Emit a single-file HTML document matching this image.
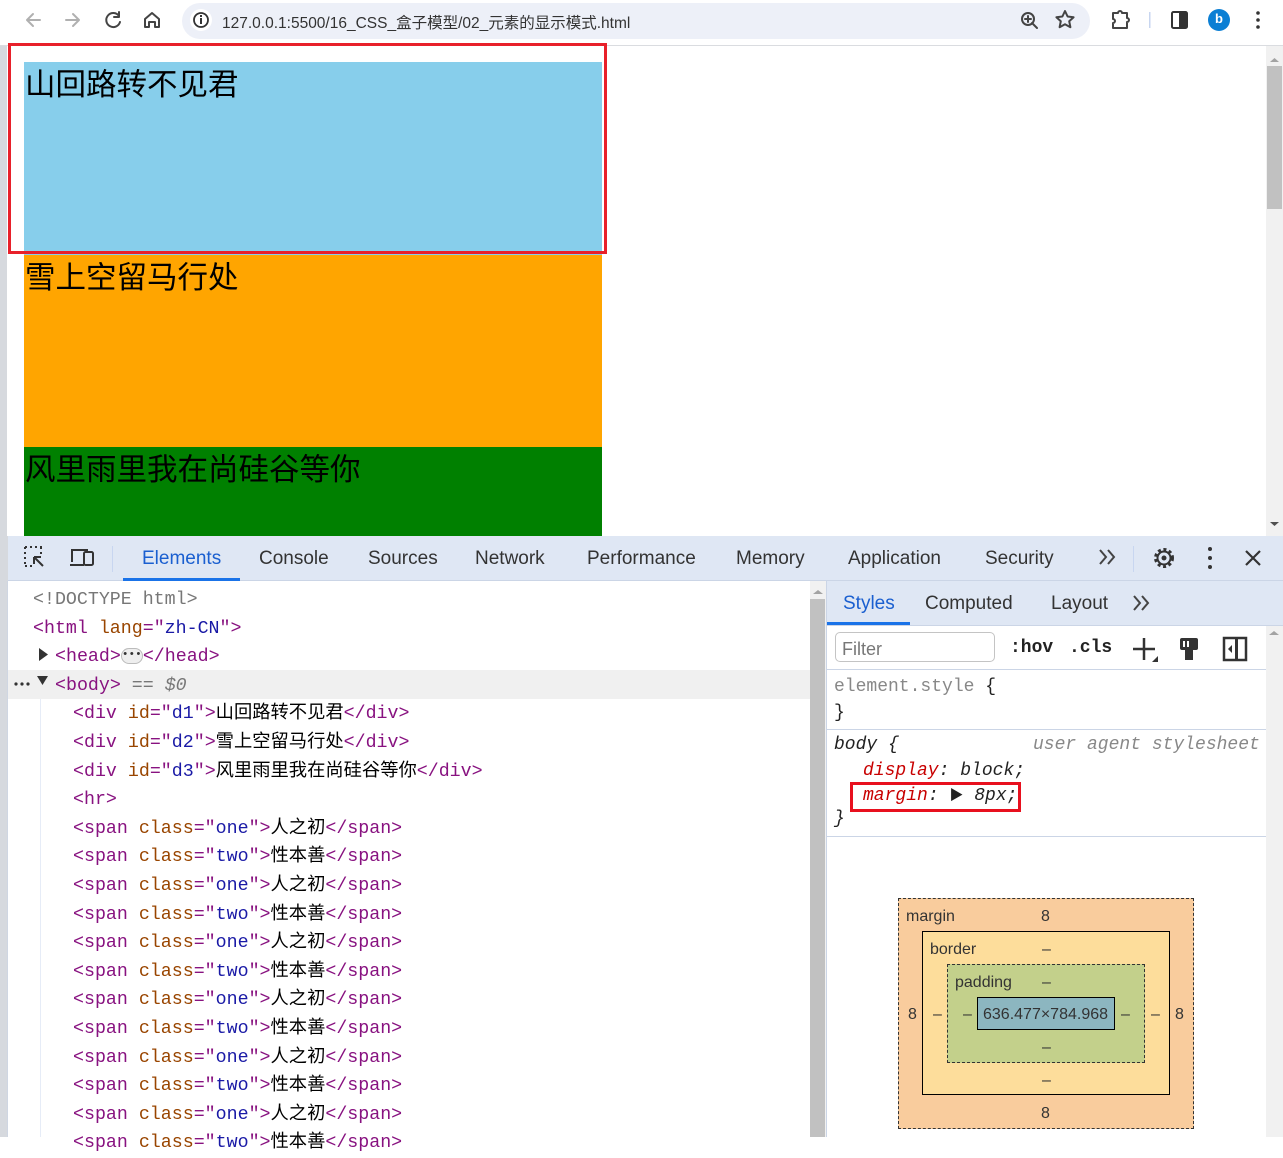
<!DOCTYPE html>
<html><head><meta charset="utf-8">
<style>
*{margin:0;padding:0;box-sizing:border-box}
body{width:1283px;height:1137px;overflow:hidden;position:relative;background:#fff;font-family:"Liberation Sans","Noto Sans CJK SC",sans-serif}
.a{position:absolute}
.mono{font-family:"Liberation Mono","Noto Sans CJK SC",monospace}
.tg{color:#881280}.an{color:#994500}.av{color:#1a1aa6}
.ln{position:absolute;left:0;height:28.6px;line-height:28.6px;font-size:18.3px;white-space:nowrap}
.tab{position:absolute;top:548px;font-size:19px;color:#333}
</style></head><body>
<div class="a" style="left:0;top:0;width:1283px;height:46px;background:#fff;border-bottom:1px solid #dadce0"></div>
<svg class="a" style="left:0;top:0" width="1283" height="46">
<rect x="182" y="3" width="908" height="36" rx="18" fill="#edf0f8"/>
<g fill="none" stroke-width="2" stroke-linecap="round" stroke-linejoin="round">
<path d="M40 20H27M33 14l-6 6 6 6" stroke="#b0b0b0"/>
<path d="M66 20h13M73 14l6 6-6 6" stroke="#b0b0b0"/>
<path d="M119 16a7 7 0 1 0 1 6M119 12v5h-5" stroke="#444"/>
<path d="M145 27v-8l7-6 7 6v8h-4v-5h-6v5z" stroke="#444"/>
<circle cx="1028" cy="19" r="6" stroke="#444"/><path d="M1032 23l5 5M1028 16v6M1025 19h6" stroke="#444"/>
<path d="M1065 11l2.6 5.5 6 .7-4.4 4 1.2 6-5.4-3-5.4 3 1.2-6-4.4-4 6-.7z" stroke="#444"/>
<path d="M1113 13h5a2 2 0 0 1 4 0h5v5a2 2 0 0 1 0 4v6h-14v-5a2 2 0 0 0 0-4z" stroke="#444"/>
</g>
<circle cx="201" cy="20" r="11" fill="#fff"/>
<circle cx="201" cy="20" r="7" fill="none" stroke="#333" stroke-width="1.8"/><rect x="200" y="18" width="2" height="6" fill="#333"/><rect x="200" y="15" width="2" height="2" fill="#333"/>
<rect x="1149" y="12" width="1.5" height="16" fill="#c8d6f0"/>
<rect x="1172" y="12" width="15" height="16" rx="1.5" fill="none" stroke="#333" stroke-width="2"/><rect x="1179" y="12" width="8" height="16" fill="#333"/>
<circle cx="1219" cy="20" r="11" fill="#0b7fd4"/>
<circle cx="1258" cy="13" r="1.8" fill="#333"/><circle cx="1258" cy="20" r="1.8" fill="#333"/><circle cx="1258" cy="27" r="1.8" fill="#333"/>
</svg>
<div class="a" style="left:1213px;top:11px;width:12px;font-size:13px;color:#fff;text-align:center;font-weight:bold">b</div>
<div class="a" style="left:222px;top:11px;font-size:15.5px;color:#333">127.0.0.1:5500/16_CSS_盒子模型/02_元素的显示模式.html</div>

<div class="a" style="left:0;top:46px;width:7px;height:490px;background:#d6d9de"></div>
<div class="a" style="left:24px;top:62px;width:578px;height:193px;background:#87ceeb"></div>
<div class="a" style="left:24px;top:255px;width:578px;height:192px;background:#ffa500"></div>
<div class="a" style="left:24px;top:447px;width:578px;height:89px;background:#008000"></div>
<div class="a" style="left:25px;top:65px;font-size:30.5px;line-height:40px;color:#000">山回路转不见君</div>
<div class="a" style="left:25px;top:258px;font-size:30.5px;line-height:40px;color:#000">雪上空留马行处</div>
<div class="a" style="left:25px;top:450px;font-size:30.5px;line-height:40px;color:#000">风里雨里我在尚硅谷等你</div>
<div class="a" style="left:8px;top:43px;width:599px;height:211px;border:3px solid #e8202a"></div>
<div class="a" style="left:1266px;top:46px;width:17px;height:490px;background:#f1f1f1"></div>
<div class="a" style="left:1267px;top:66px;width:15px;height:143px;background:#c1c1c1"></div>
<svg class="a" style="left:1266px;top:46px" width="17" height="490"><path d="M4 16l4.5-4 4.5 4z" fill="#a3a3a3"/><path d="M4 476l4.5 4 4.5-4z" fill="#505050"/></svg>

<div class="a" style="left:0;top:536px;width:1283px;height:45px;background:#dfe7f4;border-bottom:1px solid #cbd5e6"></div>
<div class="a" style="left:0;top:536px;width:8px;height:601px;background:#d6d9de"></div>
<svg class="a" style="left:0;top:536px" width="1283" height="45">
<g fill="none" stroke="#333" stroke-width="2">
<path d="M25 11h2M30 11h2M35 11h2M40 11h2M25 11v2M25 16v2M25 21v2M25 26v2M25 30h2M30 30h2M41 11v2M41 16v2"/>
<path d="M34 21l9 9M34 21v7M34 21h7"/>
<path d="M72 26V14h16M70 29h14"/><rect x="84" y="16" width="9" height="13" rx="1.5"/>
</g>
<rect x="112" y="10" width="1" height="26" fill="#c8d6f0"/>
<rect x="123" y="42" width="117" height="3" fill="#1a73e8"/>
<path d="M1100 14l6 7-6 7M1108 14l6 7-6 7" fill="none" stroke="#444" stroke-width="2"/>
<rect x="1133" y="10" width="1" height="26" fill="#c8d6f0"/>
<circle cx="1164" cy="22" r="8.5" fill="none" stroke="#333" stroke-width="3" stroke-dasharray="3 2.6"/>
<circle cx="1164" cy="22" r="6.5" fill="none" stroke="#333" stroke-width="2"/><circle cx="1164" cy="22" r="2.5" fill="#333"/>
<circle cx="1210" cy="13" r="2" fill="#333"/><circle cx="1210" cy="22" r="2" fill="#333"/><circle cx="1210" cy="31" r="2" fill="#333"/>
<path d="M1246 15l14 14M1260 15l-14 14" stroke="#333" stroke-width="2.2"/>
</svg>
<div class="tab" style="left:142px;color:#1a5fd0">Elements</div>
<div class="tab" style="left:259px">Console</div>
<div class="tab" style="left:368px">Sources</div>
<div class="tab" style="left:475px">Network</div>
<div class="tab" style="left:587px">Performance</div>
<div class="tab" style="left:736px">Memory</div>
<div class="tab" style="left:848px">Application</div>
<div class="tab" style="left:985px">Security</div>

<div class="a" style="left:7px;top:581px;width:1px;height:556px;background:#cfd6e2"></div>
<div class="a" style="left:8px;top:670px;width:802px;height:29px;background:#f0f0f0"></div>
<div class="a" style="left:40px;top:699px;width:1px;height:438px;background:#e6ecf7"></div>
<div class="a" style="left:810px;top:581px;width:16px;height:556px;background:#f1f1f1"></div>
<div class="a" style="left:810px;top:599px;width:15px;height:538px;background:#c1c1c1"></div>
<svg class="a" style="left:810px;top:581px" width="16" height="20"><path d="M3 13l5-4 5 4z" fill="#a3a3a3"/></svg>
<div class="a" style="left:826px;top:581px;width:1px;height:556px;background:#cbd5e6"></div>
<svg class="a" style="left:0;top:640px" width="60" height="60"><path d="M39 8l9 6.5-9 6.5z" fill="#333"/><path d="M37 36h11l-5.5 9z" fill="#333"/><circle cx="16" cy="44" r="1.6" fill="#333"/><circle cx="22" cy="44" r="1.6" fill="#333"/><circle cx="28" cy="44" r="1.6" fill="#333"/></svg>
<div class="a mono" style="left:0;top:586px;width:810px">
<div class="ln" style="top:0;left:33px;color:#777">&lt;!DOCTYPE html&gt;</div>
<div class="ln" style="top:28.6px;left:33px"><span class="tg">&lt;html </span><span class="an">lang</span><span class="tg">="</span><span class="av">zh-CN</span><span class="tg">"&gt;</span></div>
<div class="ln" style="top:57.2px;left:55px"><span class="tg">&lt;head&gt;</span><span style="display:inline-block;width:22px;height:16px;border:1px solid #bbb;border-radius:8px;background:#eee;font-size:11px;line-height:12px;text-align:center;vertical-align:middle;color:#333">•••</span><span class="tg">&lt;/head&gt;</span></div>
<div class="ln" style="top:85.8px;left:55px"><span class="tg">&lt;body&gt;</span><span style="color:#777;font-style:italic"> == $0</span></div>
<div class="ln" style="top:114.4px;left:73px"><span class="tg">&lt;div </span><span class="an">id</span><span class="tg">="</span><span class="av">d1</span><span class="tg">"&gt;</span>山回路转不见君<span class="tg">&lt;/div&gt;</span></div>
<div class="ln" style="top:143px;left:73px"><span class="tg">&lt;div </span><span class="an">id</span><span class="tg">="</span><span class="av">d2</span><span class="tg">"&gt;</span>雪上空留马行处<span class="tg">&lt;/div&gt;</span></div>
<div class="ln" style="top:171.6px;left:73px"><span class="tg">&lt;div </span><span class="an">id</span><span class="tg">="</span><span class="av">d3</span><span class="tg">"&gt;</span>风里雨里我在尚硅谷等你<span class="tg">&lt;/div&gt;</span></div>
<div class="ln" style="top:200.2px;left:73px"><span class="tg">&lt;hr&gt;</span></div>
<div class="ln" style="top:228.8px;left:73px"><span class="tg">&lt;span </span><span class="an">class</span><span class="tg">="</span><span class="av">one</span><span class="tg">"&gt;</span>人之初<span class="tg">&lt;/span&gt;</span></div>
<div class="ln" style="top:257.4px;left:73px"><span class="tg">&lt;span </span><span class="an">class</span><span class="tg">="</span><span class="av">two</span><span class="tg">"&gt;</span>性本善<span class="tg">&lt;/span&gt;</span></div>
<div class="ln" style="top:286px;left:73px"><span class="tg">&lt;span </span><span class="an">class</span><span class="tg">="</span><span class="av">one</span><span class="tg">"&gt;</span>人之初<span class="tg">&lt;/span&gt;</span></div>
<div class="ln" style="top:314.6px;left:73px"><span class="tg">&lt;span </span><span class="an">class</span><span class="tg">="</span><span class="av">two</span><span class="tg">"&gt;</span>性本善<span class="tg">&lt;/span&gt;</span></div>
<div class="ln" style="top:343.2px;left:73px"><span class="tg">&lt;span </span><span class="an">class</span><span class="tg">="</span><span class="av">one</span><span class="tg">"&gt;</span>人之初<span class="tg">&lt;/span&gt;</span></div>
<div class="ln" style="top:371.8px;left:73px"><span class="tg">&lt;span </span><span class="an">class</span><span class="tg">="</span><span class="av">two</span><span class="tg">"&gt;</span>性本善<span class="tg">&lt;/span&gt;</span></div>
<div class="ln" style="top:400.4px;left:73px"><span class="tg">&lt;span </span><span class="an">class</span><span class="tg">="</span><span class="av">one</span><span class="tg">"&gt;</span>人之初<span class="tg">&lt;/span&gt;</span></div>
<div class="ln" style="top:429px;left:73px"><span class="tg">&lt;span </span><span class="an">class</span><span class="tg">="</span><span class="av">two</span><span class="tg">"&gt;</span>性本善<span class="tg">&lt;/span&gt;</span></div>
<div class="ln" style="top:457.6px;left:73px"><span class="tg">&lt;span </span><span class="an">class</span><span class="tg">="</span><span class="av">one</span><span class="tg">"&gt;</span>人之初<span class="tg">&lt;/span&gt;</span></div>
<div class="ln" style="top:486.2px;left:73px"><span class="tg">&lt;span </span><span class="an">class</span><span class="tg">="</span><span class="av">two</span><span class="tg">"&gt;</span>性本善<span class="tg">&lt;/span&gt;</span></div>
<div class="ln" style="top:514.8px;left:73px"><span class="tg">&lt;span </span><span class="an">class</span><span class="tg">="</span><span class="av">one</span><span class="tg">"&gt;</span>人之初<span class="tg">&lt;/span&gt;</span></div>
<div class="ln" style="top:543.4px;left:73px"><span class="tg">&lt;span </span><span class="an">class</span><span class="tg">="</span><span class="av">two</span><span class="tg">"&gt;</span>性本善<span class="tg">&lt;/span&gt;</span></div>
</div>

<div class="a" style="left:827px;top:581px;width:456px;height:45px;background:#dfe7f4;border-bottom:1px solid #cbd5e6"></div>
<div class="a" style="left:827px;top:622px;width:83px;height:3px;background:#1a73e8"></div>
<div class="a" style="left:843px;top:593px;font-size:19px;color:#1a5fd0">Styles</div>
<div class="a" style="left:925px;top:593px;font-size:19px;color:#333">Computed</div>
<div class="a" style="left:1051px;top:593px;font-size:19px;color:#333">Layout</div>
<svg class="a" style="left:1130px;top:590px" width="26" height="26"><path d="M4 6l6 7-6 7M12 6l6 7-6 7" fill="none" stroke="#444" stroke-width="2"/></svg>
<div class="a" style="left:1266px;top:626px;width:17px;height:511px;background:#f1f1f1"></div>
<svg class="a" style="left:1266px;top:626px" width="17" height="20"><path d="M3 9l5-4 5 4z" fill="#a3a3a3"/></svg>
<div class="a" style="left:835px;top:632px;width:160px;height:30px;border:1px solid #c4c4c4;border-radius:5px"></div>
<div class="a" style="left:842px;top:639px;font-size:18px;color:#777">Filter</div>
<div class="a mono" style="left:1010px;top:638px;font-size:18px;color:#222;font-weight:bold">:hov</div>
<div class="a mono" style="left:1069px;top:638px;font-size:18px;color:#222;font-weight:bold">.cls</div>
<svg class="a" style="left:1128px;top:632px" width="140" height="34">
<path d="M16 6v22M5 17h22" stroke="#333" stroke-width="2.5"/><path d="M24 30l6-6v6z" fill="#333"/>
<rect x="52" y="6" width="18" height="12" rx="2" fill="#333"/><rect x="55" y="9" width="2" height="6" fill="#fff"/><rect x="59" y="9" width="2" height="6" fill="#fff"/><rect x="57" y="18" width="8" height="10" fill="#333"/>
<rect x="96" y="6" width="22" height="22" fill="none" stroke="#333" stroke-width="2.5"/><rect x="107" y="6" width="3" height="22" fill="#333"/><path d="M104 13l-4 4 4 4z" fill="#333"/>
</svg>
<div class="a" style="left:827px;top:669px;width:439px;height:1px;background:#cbd5e6"></div>
<div class="a mono" style="left:834px;top:675px;font-size:18px;line-height:24px;color:#888">element.style <span style="color:#222">{</span></div>
<div class="a mono" style="left:834px;top:701px;font-size:18px;line-height:24px;color:#222">}</div>
<div class="a" style="left:827px;top:729px;width:439px;height:1px;background:#cbd5e6"></div>
<div class="a mono" style="left:834px;top:733px;font-size:18px;line-height:24px;color:#222;font-style:italic">body {</div>
<div class="a mono" style="left:1033px;top:733px;font-size:18px;line-height:24px;color:#888;font-style:italic">user agent stylesheet</div>
<div class="a mono" style="left:863px;top:759px;font-size:18px;line-height:24px;font-style:italic"><span style="color:#c80000">display</span><span style="color:#222">: block;</span></div>
<div class="a mono" style="left:863px;top:784px;font-size:18px;line-height:24px;font-style:italic"><span style="color:#c80000">margin</span><span style="color:#222">: <span style="font-style:normal;font-size:14px">▶</span> 8px;</span></div>
<div class="a" style="left:850px;top:782px;width:171px;height:30px;border:3px solid #e8101e"></div>
<div class="a mono" style="left:834px;top:807px;font-size:18px;line-height:24px;color:#222;font-style:italic">}</div>
<div class="a" style="left:827px;top:836px;width:439px;height:1px;background:#cbd5e6"></div>

<div class="a" style="left:898px;top:898px;width:296px;height:231px;background:#f9cc9d;border:1px dashed #333"></div>
<div class="a" style="left:922px;top:931px;width:248px;height:164px;background:#fddd9b;border:1px solid #000"></div>
<div class="a" style="left:947px;top:964px;width:198px;height:99px;background:#c3d08b;border:1px dashed #333"></div>
<div class="a" style="left:977px;top:997px;width:138px;height:33px;background:#8cb6c0;border:1px solid #000"></div>
<div class="a" style="left:906px;top:908px;font-size:16px;color:#333">margin</div>
<div class="a" style="left:1041px;top:908px;font-size:16px;color:#333">8</div>
<div class="a" style="left:930px;top:941px;font-size:16px;color:#333">border</div>
<div class="a" style="left:1042px;top:941px;font-size:16px;color:#333">–</div>
<div class="a" style="left:955px;top:974px;font-size:16px;color:#333">padding</div>
<div class="a" style="left:1042px;top:974px;font-size:16px;color:#333">–</div>
<div class="a" style="left:983px;top:1006px;font-size:16px;color:#333">636.477×784.968</div>
<div class="a" style="left:908px;top:1006px;font-size:16px;color:#333">8</div>
<div class="a" style="left:933px;top:1006px;font-size:16px;color:#333">–</div>
<div class="a" style="left:963px;top:1006px;font-size:16px;color:#333">–</div>
<div class="a" style="left:1121px;top:1006px;font-size:16px;color:#333">–</div>
<div class="a" style="left:1151px;top:1006px;font-size:16px;color:#333">–</div>
<div class="a" style="left:1175px;top:1006px;font-size:16px;color:#333">8</div>
<div class="a" style="left:1042px;top:1039px;font-size:16px;color:#333">–</div>
<div class="a" style="left:1042px;top:1072px;font-size:16px;color:#333">–</div>
<div class="a" style="left:1041px;top:1105px;font-size:16px;color:#333">8</div>
</body></html>
